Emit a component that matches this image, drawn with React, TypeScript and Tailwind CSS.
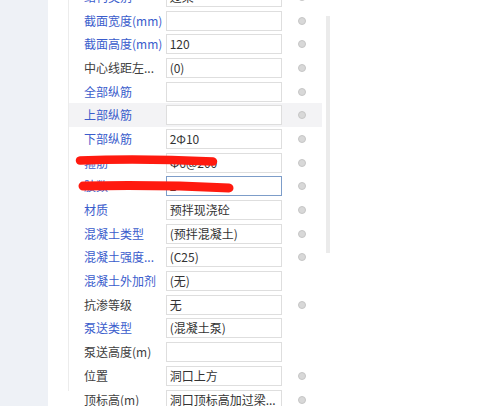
import React from 'react';

type Row = {
  label: string;
  value?: string;
  blue?: boolean;
  dot?: boolean;
  active?: boolean;
  focused?: boolean;
};

const rows: Row[] = [
  { label: '结构类别', value: '过梁', blue: true, dot: true },
  { label: '截面宽度(mm)', blue: true, dot: true },
  { label: '截面高度(mm)', value: '120', blue: true, dot: true },
  { label: '中心线距左...', value: '(0)', dot: true },
  { label: '全部纵筋', blue: true, dot: true },
  { label: '上部纵筋', blue: true, dot: true, active: true },
  { label: '下部纵筋', value: '2Φ10', blue: true, dot: true },
  { label: '箍筋', value: 'Φ6@200', blue: true, dot: true },
  { label: '肢数', value: '2', blue: true, dot: true, focused: true },
  { label: '材质', value: '预拌现浇砼', blue: true, dot: true },
  { label: '混凝土类型', value: '(预拌混凝土)', blue: true, dot: true },
  { label: '混凝土强度...', value: '(C25)', blue: true, dot: true },
  { label: '混凝土外加剂', value: '(无)', blue: true },
  { label: '抗渗等级', value: '无', dot: true },
  { label: '泵送类型', value: '(混凝土泵)', blue: true },
  { label: '泵送高度(m)' },
  { label: '位置', value: '洞口上方', dot: true },
  { label: '顶标高(m)', value: '洞口顶标高加过梁...', dot: true },
];

const PropertyRow = ({ row }: { row: Row }) => (
  <div className={`flex items-center h-[23.7px] shrink-0 ${row.active ? 'bg-[#f3f3f5]' : ''}`}>
    <div
      className={`w-[97px] pl-[15px] whitespace-nowrap overflow-hidden text-[12px] ${
        row.blue ? 'text-[#3a5ccc]' : 'text-[#404040]'
      }`}
    >
      {row.label}
    </div>
    <div
      className={`w-[117px] h-[20px] bg-white flex items-center px-[3px] text-[12px] text-[#333] whitespace-nowrap overflow-hidden border ${
        row.focused ? 'border-[#7d9dc9]' : 'border-[#dedede]'
      }`}
    >
      {row.value}
    </div>
    <div className="w-[40px] flex justify-center">
      {row.dot && <div className="w-[8px] h-[8px] rounded-full bg-[#d8d8d8] border border-[#c6c6c6]" />}
    </div>
  </div>
);

export default function App() {
  return (
    <div
      className="relative w-[479px] h-[406px] overflow-hidden bg-white flex"
      style={{ fontFamily: '"Microsoft YaHei", "Noto Sans CJK SC", "Noto Sans", sans-serif' }}
    >
      <div className="w-[48px] h-full bg-[#eef1f6] shrink-0" />
      <div className="w-[20px] h-full bg-white shrink-0" />
      <div className="w-[254px] h-full border-l border-[#ececec] flex flex-col mt-[-15px] shrink-0">
        {rows.map((r) => (
          <PropertyRow key={r.label} row={r} />
        ))}
      </div>
      <div className="w-[4px] ml-[4px] shrink-0">
        <div className="mt-[16px] h-[237px] bg-[#ebebeb]" />
      </div>

      {/* red scribbles over the redacted rows */}
      <svg className="absolute left-0 top-0 pointer-events-none" width="479" height="406">
        <path d="M80 160.5 Q140 158 213 161.5" stroke="#ff1a0f" strokeWidth="8.5" strokeLinecap="round" fill="none" />
        <path d="M83 186 Q160 184.5 229 188" stroke="#ff1a0f" strokeWidth="9" strokeLinecap="round" fill="none" />
      </svg>
    </div>
  );
}
